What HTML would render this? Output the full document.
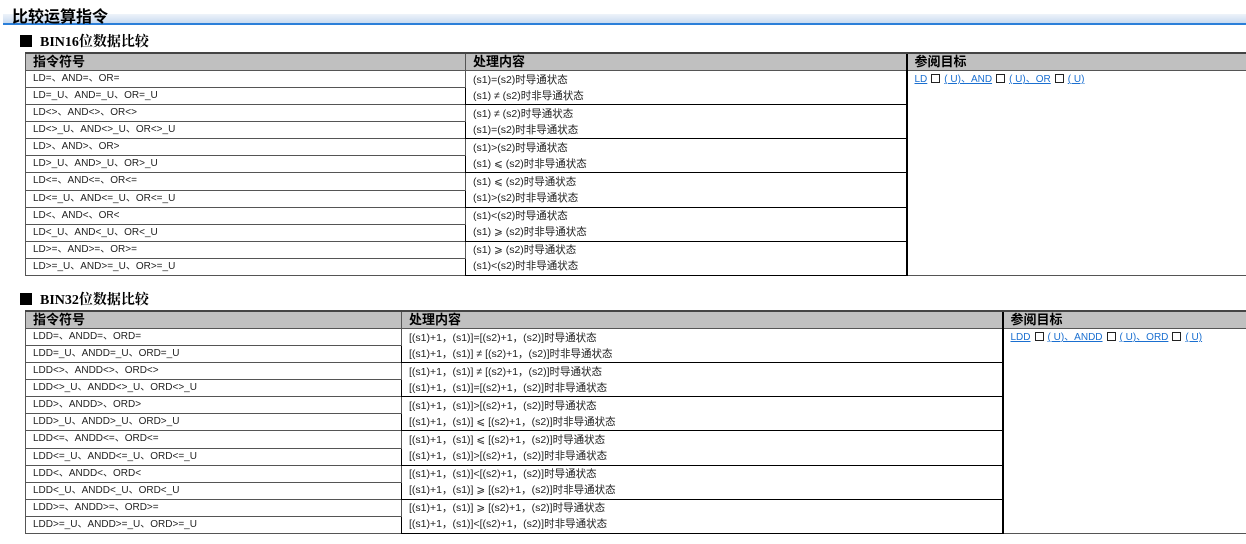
<!DOCTYPE html>
<html><head><meta charset="utf-8"><style>
body{margin:0;width:1246px;height:544px;overflow:hidden;background:#fff;font-family:"Liberation Sans","Noto Sans CJK SC",sans-serif;position:relative}
.title{position:absolute;left:3px;top:14px;width:1243px;height:9px;background:linear-gradient(#eef3fa,#c9dbf0);border-bottom:2px solid #2b7fd9}
.tt{position:absolute;left:12px;top:3px;font-size:16px;font-weight:bold;color:#000;letter-spacing:0px}
.h2{position:absolute;left:20px;font-size:14px;font-weight:bold;font-family:"Liberation Serif","Noto Serif CJK SC",serif}
.h2 b{display:inline-block;width:12px;height:12px;background:#000;margin-right:8px;vertical-align:-1px}
table{position:absolute;left:25px;border-collapse:collapse;table-layout:fixed;font-size:10px;color:#222}
td,th{border:1px solid #555;padding:0 0 0 7px;height:16px;line-height:16px;white-space:nowrap;overflow:hidden;text-align:left;vertical-align:middle}
th{background:#c0c0c0;font-size:13px;font-weight:bold;color:#000;border-top:2px solid #444;height:15px}
td.p{border:1px solid #000;line-height:16px;font-size:10.5px}
td.r{border-left:2px solid #000;vertical-align:top;font-size:10px;line-height:18px}
a{color:#1a6fd0;text-decoration:underline}
.sq{display:inline-block;width:7px;height:7px;border:1.5px solid #222;margin:0 4px;vertical-align:-1px}
</style></head><body>
<div class="title"></div><div class="tt">比较运算指令</div>
<div class="h2" style="top:31px"><b></b>BIN16位数据比较</div>
<table style="top:52px;width:1240px;height:224px">
<colgroup><col style="width:440px"><col style="width:441px"><col style="width:359px"></colgroup>
<tr><th>指令符号</th><th>处理内容</th><th style="border-left:2px solid #000">参阅目标</th></tr>
<tr><td>LD=、AND=、OR=</td><td class="p" rowspan="2">(s1)=(s2)时导通状态<br>(s1) ≠ (s2)时非导通状态</td><td class="r" rowspan="12"><a>LD</a><span class="sq"></span><a>( U)、AND</a><span class="sq"></span><a>( U)、OR</a><span class="sq"></span><a>( U)</a></td></tr>
<tr><td>LD=_U、AND=_U、OR=_U</td></tr>
<tr><td>LD&lt;&gt;、AND&lt;&gt;、OR&lt;&gt;</td><td class="p" rowspan="2">(s1) ≠ (s2)时导通状态<br>(s1)=(s2)时非导通状态</td></tr>
<tr><td>LD&lt;&gt;_U、AND&lt;&gt;_U、OR&lt;&gt;_U</td></tr>
<tr><td>LD&gt;、AND&gt;、OR&gt;</td><td class="p" rowspan="2">(s1)&gt;(s2)时导通状态<br>(s1) ⩽ (s2)时非导通状态</td></tr>
<tr><td>LD&gt;_U、AND&gt;_U、OR&gt;_U</td></tr>
<tr><td>LD&lt;=、AND&lt;=、OR&lt;=</td><td class="p" rowspan="2">(s1) ⩽ (s2)时导通状态<br>(s1)&gt;(s2)时非导通状态</td></tr>
<tr><td>LD&lt;=_U、AND&lt;=_U、OR&lt;=_U</td></tr>
<tr><td>LD&lt;、AND&lt;、OR&lt;</td><td class="p" rowspan="2">(s1)&lt;(s2)时导通状态<br>(s1) ⩾ (s2)时非导通状态</td></tr>
<tr><td>LD&lt;_U、AND&lt;_U、OR&lt;_U</td></tr>
<tr><td>LD&gt;=、AND&gt;=、OR&gt;=</td><td class="p" rowspan="2">(s1) ⩾ (s2)时导通状态<br>(s1)&lt;(s2)时非导通状态</td></tr>
<tr><td>LD&gt;=_U、AND&gt;=_U、OR&gt;=_U</td></tr>
</table>
<div class="h2" style="top:289px"><b></b>BIN32位数据比较</div>
<table style="top:310px;width:1240px;height:224px">
<colgroup><col style="width:376px"><col style="width:601px"><col style="width:263px"></colgroup>
<tr><th>指令符号</th><th>处理内容</th><th style="border-left:2px solid #000">参阅目标</th></tr>
<tr><td>LDD=、ANDD=、ORD=</td><td class="p" rowspan="2">[(s1)+1，(s1)]=[(s2)+1，(s2)]时导通状态<br>[(s1)+1，(s1)] ≠ [(s2)+1，(s2)]时非导通状态</td><td class="r" rowspan="12"><a>LDD</a><span class="sq"></span><a>( U)、ANDD</a><span class="sq"></span><a>( U)、ORD</a><span class="sq"></span><a>( U)</a></td></tr>
<tr><td>LDD=_U、ANDD=_U、ORD=_U</td></tr>
<tr><td>LDD&lt;&gt;、ANDD&lt;&gt;、ORD&lt;&gt;</td><td class="p" rowspan="2">[(s1)+1，(s1)] ≠ [(s2)+1，(s2)]时导通状态<br>[(s1)+1，(s1)]=[(s2)+1，(s2)]时非导通状态</td></tr>
<tr><td>LDD&lt;&gt;_U、ANDD&lt;&gt;_U、ORD&lt;&gt;_U</td></tr>
<tr><td>LDD&gt;、ANDD&gt;、ORD&gt;</td><td class="p" rowspan="2">[(s1)+1，(s1)]&gt;[(s2)+1，(s2)]时导通状态<br>[(s1)+1，(s1)] ⩽ [(s2)+1，(s2)]时非导通状态</td></tr>
<tr><td>LDD&gt;_U、ANDD&gt;_U、ORD&gt;_U</td></tr>
<tr><td>LDD&lt;=、ANDD&lt;=、ORD&lt;=</td><td class="p" rowspan="2">[(s1)+1，(s1)] ⩽ [(s2)+1，(s2)]时导通状态<br>[(s1)+1，(s1)]&gt;[(s2)+1，(s2)]时非导通状态</td></tr>
<tr><td>LDD&lt;=_U、ANDD&lt;=_U、ORD&lt;=_U</td></tr>
<tr><td>LDD&lt;、ANDD&lt;、ORD&lt;</td><td class="p" rowspan="2">[(s1)+1，(s1)]&lt;[(s2)+1，(s2)]时导通状态<br>[(s1)+1，(s1)] ⩾ [(s2)+1，(s2)]时非导通状态</td></tr>
<tr><td>LDD&lt;_U、ANDD&lt;_U、ORD&lt;_U</td></tr>
<tr><td>LDD&gt;=、ANDD&gt;=、ORD&gt;=</td><td class="p" rowspan="2">[(s1)+1，(s1)] ⩾ [(s2)+1，(s2)]时导通状态<br>[(s1)+1，(s1)]&lt;[(s2)+1，(s2)]时非导通状态</td></tr>
<tr><td>LDD&gt;=_U、ANDD&gt;=_U、ORD&gt;=_U</td></tr>
</table>
</body></html>
